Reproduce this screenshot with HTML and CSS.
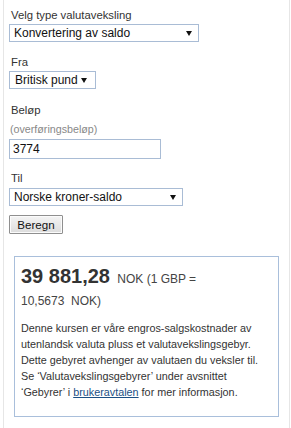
FILE: index.html
```html
<!DOCTYPE html>
<html lang="no">
<head>
<meta charset="utf-8">
<title>Valutaveksling</title>
<link rel="stylesheet" href="styles.css">
</head>
<body>
<div class="page">
  <div class="label first">Velg type valutaveksling</div>
  <div class="select wide">
    <span>Konvertering av saldo</span>
    <svg class="arrow" width="6" height="5" viewBox="0 0 6 5"><path d="M0 0H6L3 5Z" fill="#111"/></svg>
  </div>

  <div class="label fra">Fra</div>
  <div class="select narrow">
    <span>Britisk pund</span>
    <svg class="arrow" width="6" height="5" viewBox="0 0 6 5"><path d="M0 0H6L3 5Z" fill="#111"/></svg>
  </div>

  <div class="label belop">Beløp</div>
  <div class="hint">(overføringsbeløp)</div>
  <div class="input">3774</div>

  <div class="label til">Til</div>
  <div class="select mid">
    <span>Norske kroner-saldo</span>
    <svg class="arrow" width="6" height="5" viewBox="0 0 6 5"><path d="M0 0H6L3 5Z" fill="#111"/></svg>
  </div>

  <button class="btn">Beregn</button>

  <div class="card">
    <div class="result"><span class="amount">39 881,28</span> NOK (1 GBP =<br>10,5673&nbsp; NOK)</div>
    <p class="note">Denne kursen er våre engros-salgskostnader av utenlandsk valuta pluss et valutavekslingsgebyr. Dette gebyret avhenger av valutaen du veksler til. Se ‘Valutavekslingsgebyrer’ under avsnittet ‘Gebyrer’ i <a href="#">brukeravtalen</a> for mer informasjon.</p>
  </div>
</div>
</body>
</html>
```

FILE: styles.css
```css
html, body {
  margin: 0;
  padding: 0;
  background: #fff;
}
body {
  font-family: "Liberation Sans", Arial, sans-serif;
  color: #333;
  font-size: 12px;
}
.page {
  margin-left: 3px;
  width: 287px;
  min-height: 428px;
  box-sizing: border-box;
  border-left: 1px solid #e6e6e6;
  border-right: 1px solid #e6e6e6;
  padding: 8px 0 0 5px;
  display: flex;
  flex-direction: column;
  align-items: flex-start;
}
.label {
  font-size: 11.3px;
  line-height: 14px;
  color: #333;
  padding-left: 2px;
}
.label.fra { margin-top: 13px; }
.label.belop { margin-top: 14px; }
.label.til { margin-top: 12px; }
.select {
  margin-top: 2px;
  box-sizing: border-box;
  height: 18px;
  border: 1px solid #a9bcd5;
  background: #fff;
  display: flex;
  align-items: center;
  justify-content: space-between;
  padding: 0 6px 0 4px;
  color: #111;
  font-size: 12px;
  line-height: 16px;
  white-space: nowrap;
}
.select.wide { width: 190px; }
.select.narrow { padding: 0 8px 0 5px; gap: 3px; }
.select.mid { width: 174px; margin-top: 3px; }
.arrow { flex: none; width: 6px; height: 5px; }
.hint {
  font-size: 10.7px;
  line-height: 13px;
  color: #888;
  margin-top: 6px;
  padding-left: 1px;
}
.input {
  margin-top: 3px;
  box-sizing: border-box;
  width: 152px;
  height: 20px;
  border: 1px solid #a9bcd5;
  padding: 0 3px;
  line-height: 18px;
  color: #111;
  font-size: 12px;
}
.btn {
  margin-top: 9px;
  box-sizing: border-box;
  width: 54px;
  height: 19px;
  padding: 0;
  font-family: "Liberation Sans", Arial, sans-serif;
  font-size: 11.6px;
  line-height: 17px;
  color: #111;
  border: 1px solid #8f8f8f;
  border-radius: 1px;
  background: linear-gradient(#f4f4f4, #dcdcdc);
  box-shadow: inset 0 0 0 1px #fbfbfb;
}
.card {
  margin: 22px 0 0 5px;
  box-sizing: border-box;
  width: 265px;
  border: 1px solid #a9bfdb;
  padding: 9px 6px 16px 6px;
}
.result {
  font-size: 12px;
  line-height: 22px;
  color: #444;
}
.amount {
  font-size: 20px;
  line-height: 20px;
  font-weight: bold;
  color: #333;
  margin-right: 4px;
}
.note {
  margin: 8px 0 0 0;
  font-size: 10.8px;
  line-height: 16px;
  color: #333;
}
.note a {
  color: #1b4f84;
  text-decoration: underline;
}
```
